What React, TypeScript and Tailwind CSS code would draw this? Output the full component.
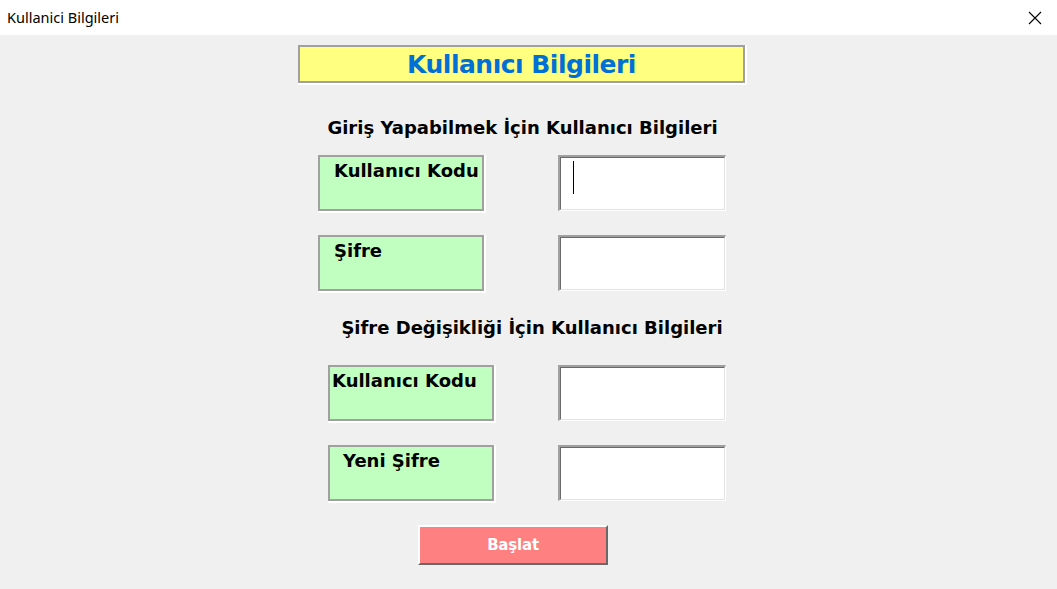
import React from 'react';

const tahoma = { fontFamily: '"DejaVu Sans", Verdana, sans-serif' };

function Label({ text, pad, className = '' }: { text: string; pad: string; className?: string }) {
  return (
    <div className={`border-r-2 border-b-2 border-white ${className}`}>
      <div className={`w-[166px] h-[56px] border-2 border-[#a0a0a0] bg-[#c0ffc0] ${pad} pt-[2px]`}>
        <span className="text-[18px] font-bold text-black leading-[24px]" style={tahoma}>
          {text}
        </span>
      </div>
    </div>
  );
}

function Field({ cursor = false, className = '' }: { cursor?: boolean; className?: string }) {
  return (
    <div className={`w-[168px] h-[56px] border-t-2 border-l-2 border-t-[#a0a0a0] border-l-[#a0a0a0] border-r border-b border-r-white border-b-white ${className}`}>
      <div className="w-full h-full border-t border-l border-t-[#696969] border-l-[#696969] border-r border-b border-r-[#e3e3e3] border-b-[#e3e3e3] bg-white pl-[12px] pt-[3px]">
        {cursor && <div className="w-px h-[33px] bg-black" />}
      </div>
    </div>
  );
}

export default function App() {
  return (
    <div className="w-[1057px] h-[589px] flex flex-col overflow-hidden">
      {/* title bar */}
      <div className="h-[35px] bg-white flex items-center justify-between pl-[7px] pr-[14px]">
        <span className="text-[14.5px] text-black" style={{ fontFamily: '"Noto Sans", "Open Sans", sans-serif' }}>
          Kullanici Bilgileri
        </span>
        <svg viewBox="0 0 16 16" className="w-[16px] h-[16px]" stroke="#000" strokeWidth="1.1" fill="none">
          <path d="M2 2 L14 14 M14 2 L2 14" />
        </svg>
      </div>

      {/* form body */}
      <div className="flex-1 bg-[#f0f0f0] pt-[10px] pl-[298px]">
        <div className="w-[449px] border-r-2 border-b-2 border-white">
          <div className="h-[38px] border-2 border-[#a0a0a0] bg-[#ffff80] flex items-center justify-center pt-[1px]">
            <span className="text-[25px] font-bold text-[#0070d8] tracking-[-0.5px] leading-none" style={tahoma}>
              Kullanıcı Bilgileri
            </span>
          </div>
        </div>

        <div className="w-[449px] mt-[31px] text-center text-[18px] font-bold text-black leading-[24px]" style={tahoma}>
          Giriş Yapabilmek İçin Kullanıcı Bilgileri
        </div>

        <div className="flex mt-[15px]">
          <Label text="Kullanıcı Kodu" pad="pl-[14px]" className="ml-[20px]" />
          <Field cursor className="ml-[72px]" />
        </div>

        <div className="flex mt-[22px]">
          <Label text="Şifre" pad="pl-[14px]" className="ml-[20px]" />
          <Field className="ml-[72px]" />
        </div>

        <div className="w-[449px] mt-[23px] pl-[19px] text-center text-[18px] font-bold text-black leading-[24px]" style={tahoma}>
          Şifre Değişikliği İçin Kullanıcı Bilgileri
        </div>

        <div className="flex mt-[25px]">
          <Label text="Kullanıcı Kodu" pad="pl-[2px]" className="ml-[30px]" />
          <Field className="ml-[62px]" />
        </div>

        <div className="flex mt-[22px]">
          <Label text="Yeni Şifre" pad="pl-[13px]" className="ml-[30px]" />
          <Field className="ml-[62px]" />
        </div>

        <button
          className="ml-[120px] mt-[22px] w-[190px] h-[40px] bg-[#ff8080] border-t-2 border-l-2 border-t-white border-l-white border-r-2 border-b-2 border-r-[#696969] border-b-[#696969] flex items-center justify-center"
        >
          <span className="text-[15px] font-bold text-white tracking-[-0.2px]" style={tahoma}>
            Başlat
          </span>
        </button>
      </div>
    </div>
  );
}
